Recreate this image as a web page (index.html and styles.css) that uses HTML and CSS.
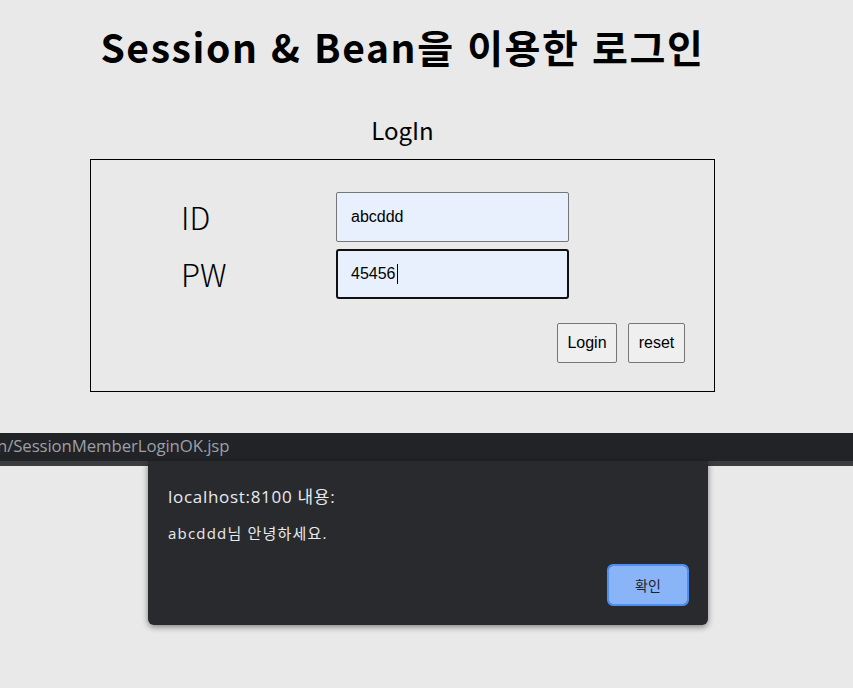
FILE: index.html
```html
<!DOCTYPE html>
<html lang="ko">
<head>
<meta charset="utf-8">
<title>Session & Bean을 이용한 로그인</title>
<link rel="stylesheet" href="styles.css">
</head>
<body>
<div class="page">
  <h1 class="title">Session &amp; Bean을 이용한 로그인</h1>
  <div class="caption">LogIn</div>
  <form class="login-box">
    <div class="fields">
      <label class="label" for="id">ID</label>
      <input class="input" id="id" type="text" value="abcddd">
      <label class="label" for="pw">PW</label>
      <div class="input input-focus">45456<span class="caret"></span></div>
    </div>
    <div class="actions">
      <button type="button" class="btn btn-login">Login</button>
      <button type="button" class="btn btn-reset">reset</button>
    </div>
  </form>
</div>

<div class="status-bar"><span class="status-text">n/SessionMemberLoginOK.jsp</span></div>
<div class="status-strip"></div>

<div class="dialog">
  <div class="dialog-title">localhost:8100 내용:</div>
  <div class="dialog-msg">abcddd님 안녕하세요.</div>
  <div class="dialog-actions">
    <button type="button" class="dialog-ok">확인</button>
  </div>
</div>
</body>
</html>
```

FILE: styles.css
```css
html, body {
  margin: 0;
  padding: 0;
  background: #e9e9e9;
}
body {
  width: 853px;
  height: 688px;
  overflow: hidden;
  position: relative;
  font-family: "Noto Sans CJK KR", "Noto Sans", sans-serif;
  color: #000;
}
.page {
  margin-left: 90px;
  width: 625px;
  text-align: center;
}
.title {
  margin: 22px 0 0;
  font-size: 39px;
  letter-spacing: 1.6px;
  line-height: 48px;
  font-weight: 700;
  white-space: nowrap;
}
.caption {
  margin-top: 45px;
  font-size: 24px;
  line-height: 30px;
}
.login-box {
  margin: 14px 0 0;
  box-sizing: border-box;
  height: 233px;
  border: 1px solid #000;
  padding: 32px 29px 0 90px;
  text-align: left;
}
.fields {
  display: grid;
  grid-template-columns: 155px 233px;
  grid-auto-rows: 50px;
  row-gap: 7px;
  align-items: center;
}
.label {
  font-size: 31px;
  font-weight: 300;
  line-height: 40px;
}
.input {
  box-sizing: border-box;
  width: 233px;
  height: 50px;
  margin: 0;
  border: 1px solid #767676;
  border-radius: 2px;
  background: #e8f0fe;
  padding: 0 14px;
  font-family: "Liberation Sans", Arial, sans-serif;
  font-size: 16px;
  color: #000;
  outline: none;
}
.input-focus {
  border: 2px solid #101010;
  border-radius: 3px;
  padding: 0 13px;
  display: flex;
  align-items: center;
}
.caret {
  display: inline-block;
  width: 1px;
  height: 20px;
  background: #000;
  margin-left: 1px;
}
.actions {
  display: flex;
  justify-content: flex-end;
  gap: 11px;
  margin-top: 24px;
}
.btn {
  box-sizing: border-box;
  height: 40px;
  padding: 0 9px;
  border: 1px solid #767676;
  border-radius: 2px;
  background: #efefef;
  font-family: "Liberation Sans", Arial, sans-serif;
  font-size: 16px;
  color: #000;
}
.btn-login { width: 60px; }
.btn-reset { width: 57px; }

.status-bar {
  position: absolute;
  left: 0;
  top: 433px;
  width: 853px;
  height: 28px;
  background: #222326;
  overflow: hidden;
}
.status-text {
  position: absolute;
  left: -3px;
  top: 3px;
  font-family: "Open Sans", "Noto Sans", sans-serif;
  font-size: 16.8px;
  line-height: 20px;
  color: #9aa0a6;
  white-space: nowrap;
  letter-spacing: -0.1px;
}
.status-strip {
  position: absolute;
  left: 0;
  top: 461px;
  width: 853px;
  height: 5px;
  background: #3b3c40;
}
.dialog {
  position: absolute;
  left: 148px;
  top: 461px;
  width: 560px;
  height: 164px;
  box-sizing: border-box;
  background: #292a2d;
  border-radius: 0 0 6px 6px;
  box-shadow: 0 2px 6px rgba(0, 0, 0, 0.45);
  padding: 22px 19px 19px 20px;
  color: #e8eaed;
  font-family: "Open Sans", "Noto Sans CJK KR", sans-serif;
  display: flex;
  flex-direction: column;
}
.dialog-title {
  font-size: 17px;
  letter-spacing: 0.7px;
  line-height: 28px;
  white-space: nowrap;
}
.dialog-msg {
  font-size: 15px;
  letter-spacing: 1.2px;
  line-height: 20px;
  margin-top: 12px;
  white-space: nowrap;
}
.dialog-actions {
  margin-top: auto;
  display: flex;
  justify-content: flex-end;
}
.dialog-ok {
  box-sizing: border-box;
  width: 82px;
  height: 42px;
  background: #8ab4f8;
  border: 2px solid #2c2d30;
  border-radius: 6px;
  outline: 2px solid #4e8ef7;
  outline-offset: -2px;
  font-family: "Noto Sans CJK KR", sans-serif;
  font-size: 14px;
  color: #202124;
}
```
